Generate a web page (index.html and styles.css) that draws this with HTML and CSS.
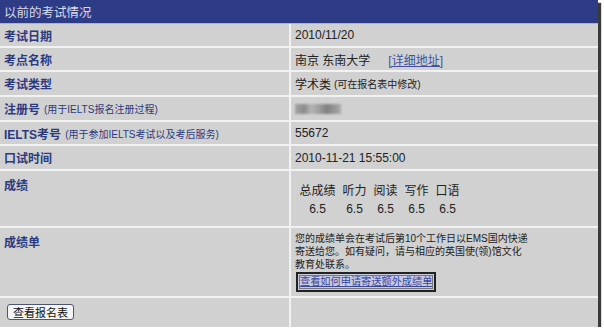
FILE: index.html
```html
<!DOCTYPE html>
<html lang="zh-CN">
<head>
    <meta charset="UTF-8">
    <title>以前的考试情况</title>
    <link rel="stylesheet" href="styles.css">
</head>
<body>
    <div class="panel">
        <div class="panel-title">以前的考试情况</div>

        <div class="label r1">考试日期</div>
        <div class="value r1">2010/11/20</div>

        <div class="label r1">考点名称</div>
        <div class="value r1">南京 东南大学 <a href="#" class="addr">[详细地址]</a></div>

        <div class="label r2">考试类型</div>
        <div class="value r2">学术类 <span class="note">(可在报名表中修改)</span></div>

        <div class="label r2">注册号 <span class="note">(用于IELTS报名注册过程)</span></div>
        <div class="value r2"><span class="blurred"></span></div>

        <div class="label r1">IELTS考号 <span class="note">(用于参加IELTS考试以及考后服务)</span></div>
        <div class="value r1">55672</div>

        <div class="label r2">口试时间</div>
        <div class="value r2">2010-11-21 15:55:00</div>

        <div class="label top">成绩</div>
        <div class="value top scores-cell">
            <table class="scores">
                <tr>
                    <td>总成绩</td>
                    <td>听力</td>
                    <td>阅读</td>
                    <td>写作</td>
                    <td>口语</td>
                </tr>
                <tr>
                    <td>6.5</td>
                    <td>6.5</td>
                    <td>6.5</td>
                    <td>6.5</td>
                    <td>6.5</td>
                </tr>
            </table>
        </div>

        <div class="label top">成绩单</div>
        <div class="value top report">
            <p>您的成绩单会在考试后第10个工作日以EMS国内快递<br>寄送给您。如有疑问，请与相应的英国使(领)馆文化<br>教育处联系。</p>
            <a href="#" class="extra">查看如何申请寄送额外成绩单</a>
        </div>

        <div class="label bottom"><button class="view-form">查看报名表</button></div>
        <div class="value bottom"></div>
    </div>
</body>
</html>
```

FILE: styles.css
```css
body {
    margin: 0;
    background: #fff;
    font-family: "Liberation Sans", "Noto Sans CJK SC", sans-serif;
}

.panel {
    width: 598px;
    height: 327px;
    display: grid;
    grid-template-columns: 289px 1fr;
    grid-template-rows: 22px 22px 22px 23px 23px 22px 23px 55px 68px 1fr;
    gap: 2px;
    background: #f2f2f2;
    box-shadow: 3px 3px 1px #3a3a3a;
    overflow: hidden;
}

.panel-title {
    grid-column: 1 / 3;
    background: #2e3b86;
    color: #d9dbea;
    font-size: 12.5px;
    padding-left: 4px;
    display: flex;
    align-items: center;
    border-bottom: 1px solid #aab0d8;
    margin-bottom: -2px;
}

.label,
.value {
    background: #d1d1d1;
    display: flex;
    align-items: center;
}

.label {
    padding-left: 4px;
    color: #2b3a80;
    font-size: 12px;
    font-weight: bold;
    white-space: nowrap;
}

.value {
    padding-left: 4px;
    color: #222;
    font-size: 12px;
}

.top {
    align-items: flex-start;
    padding-top: 5px;
}

.note {
    font-size: 10px;
    font-weight: normal;
    margin-left: 3px;
}

.label .note {
    margin-left: 4px;
}

.addr {
    color: #4252a0;
    margin-left: 18px;
}

.blurred {
    display: block;
    width: 46px;
    height: 10px;
    background: linear-gradient(90deg, #9a9a9a 0, #7a7a7a 20%, #b0b0b0 35%, #8c8c8c 55%, #6e6e6e 70%, #a2a2a2 100%);
    filter: blur(1.2px);
    opacity: 0.8;
}

.scores-cell {
    padding-top: 8px;
}

.scores {
    border-collapse: collapse;
    margin-left: 1px;
    font-size: 12px;
    color: #222;
}

.scores td {
    text-align: center;
    padding: 0 3.5px;
    height: 20px;
}

.report {
    flex-direction: column;
    padding-top: 4px;
}

.report p {
    margin: 0 0 1px;
    font-size: 10px;
    line-height: 13px;
}

.extra {
    align-self: flex-start;
    font-size: 10.2px;
    line-height: 14px;
    color: #3a47a0;
    background: #c8cbe0;
    border: 2px solid #222;
    outline: 1px solid #777;
    outline-offset: -4px;
    padding: 1px 2px;
    margin-left: 1px;
}

.bottom {
    align-items: flex-start;
    padding-top: 6px;
}

.view-form {
    font-family: "Noto Sans CJK SC", sans-serif;
    font-size: 11px;
    line-height: 14px;
    padding: 0 5px;
    margin-left: 3px;
    background: #f4f4f4;
    border: 1px solid #4d5670;
    border-radius: 3px;
    color: #111;
}
```
